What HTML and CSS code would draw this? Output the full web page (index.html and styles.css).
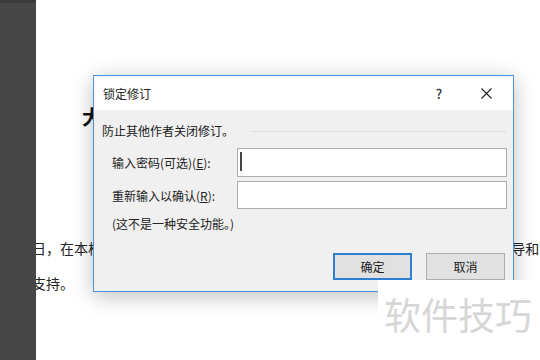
FILE: index.html
```html
<!DOCTYPE html>
<html lang="zh-CN">
<head>
    <meta charset="UTF-8">
    <meta name="viewport" content="width=device-width, initial-scale=1.0">
    <title>锁定修订</title>
    <link rel="stylesheet" href="styles.css">
</head>
<body>
    <div class="app">
        <aside class="sidebar"></aside>
        <main class="doc">
            <h1 class="doc-title">大纲与修订</h1>
            <p class="doc-text">日，在本栏目中我们将为大家介绍如何锁定修订的功能，希望能够为您提供指 导和帮助</p>
            <p class="doc-text">支持。</p>
        </main>
    </div>

    <div class="dialog">
        <div class="titlebar">
            <span class="title">锁定修订</span>
            <span class="help">?</span>
            <span class="close">
                <svg width="11" height="11" viewBox="0 0 11 11"><path d="M0.5 0.5L10.5 10.5M10.5 0.5L0.5 10.5" stroke="#222" stroke-width="1.1" fill="none"/></svg>
            </span>
        </div>
        <div class="body">
            <div class="group">
                <span>防止其他作者关闭修订。</span>
                <span class="rule"></span>
            </div>
            <div class="fields">
                <label>输入密码(可选)(<u>E</u>):</label>
                <div class="field"><span class="caret"></span></div>
                <label>重新输入以确认(<u>R</u>):</label>
                <div class="field"></div>
            </div>
            <p class="note">(这不是一种安全功能。)</p>
            <div class="actions">
                <button class="btn btn-default">确定</button>
                <button class="btn">取消</button>
            </div>
        </div>
    </div>

    <div class="watermark">软件技巧</div>
</body>
</html>
```

FILE: styles.css
```css
body {
    margin: 0;
    width: 540px;
    height: 360px;
    overflow: hidden;
    font-family: "Noto Sans CJK SC", "Liberation Sans", sans-serif;
    background: #fff;
    color: #1a1a1a;
}
.app {
    display: flex;
    height: 360px;
}
.sidebar {
    width: 36px;
    flex: none;
    background: #474747;
    border-top: 3px solid #3b3b3b;
    box-sizing: border-box;
    position: relative;
    z-index: 1;
}
.doc {
    flex: 1;
    min-width: 0;
}
.doc-title {
    margin: 104px 0 0 46px;
    font-size: 20px;
    line-height: 26px;
    font-weight: bold;
    color: #111;
    white-space: nowrap;
}
.doc-text {
    margin: 0 0 0 -4px;
    font-size: 14px;
    line-height: 35px;
    white-space: nowrap;
    color: #222;
}
.doc-title + .doc-text {
    margin-top: 101px;
}
.dialog {
    position: absolute;
    left: 93px;
    top: 75px;
    width: 421px;
    height: 217px;
    box-sizing: border-box;
    border: 1px solid #4a94d6;
    background: #f0f0f0;
    box-shadow: 0 4px 20px rgba(0, 0, 0, 0.26);
    font-size: 12px;
    display: flex;
    flex-direction: column;
}
.titlebar {
    height: 34px;
    background: #fff;
    display: flex;
    align-items: center;
    padding-left: 9px;
}
.title {
    flex: 1;
    color: #222;
}
.help {
    width: 12px;
    text-align: center;
    font-size: 13px;
    font-weight: 500;
    color: #333;
    margin-right: 36px;
}
.close {
    display: flex;
    margin-right: 21px;
}
.body {
    padding: 13px 7px 0 8px;
}
.group {
    display: flex;
    align-items: center;
    gap: 18px;
    height: 16px;
    line-height: 16px;
}
.rule {
    flex: 1;
    height: 1px;
    background: #dcdcdc;
}
.fields {
    margin-top: 9px;
    padding-left: 10px;
    display: grid;
    grid-template-columns: 125px 270px;
    grid-template-rows: 29px 28px;
    row-gap: 4px;
    align-items: center;
    color: #222;
}
.field {
    height: 100%;
    box-sizing: border-box;
    border: 1px solid #adadad;
    background: #fff;
    padding: 3px 2px;
}
.caret {
    display: block;
    width: 2px;
    height: 19px;
    background: #444;
}
.note {
    margin: 7px 0 0 10px;
    line-height: 16px;
    color: #222;
}
.actions {
    margin-top: 21px;
    display: flex;
    justify-content: flex-end;
    gap: 14px;
    padding-right: 1px;
}
.btn {
    width: 79px;
    height: 27px;
    font: inherit;
    color: #1a1a1a;
    background: #e1e1e1;
    border: 1px solid #adadad;
    padding: 0;
}
.btn-default {
    border: 2px solid #2f7fd0;
}
.watermark {
    position: absolute;
    left: 378px;
    top: 280px;
    width: 162px;
    height: 80px;
    background: #fff;
    box-sizing: border-box;
    padding: 12px 0 0 6px;
    font-size: 37px;
    line-height: 44px;
    color: #d6d6d6;
    white-space: nowrap;
}
```
